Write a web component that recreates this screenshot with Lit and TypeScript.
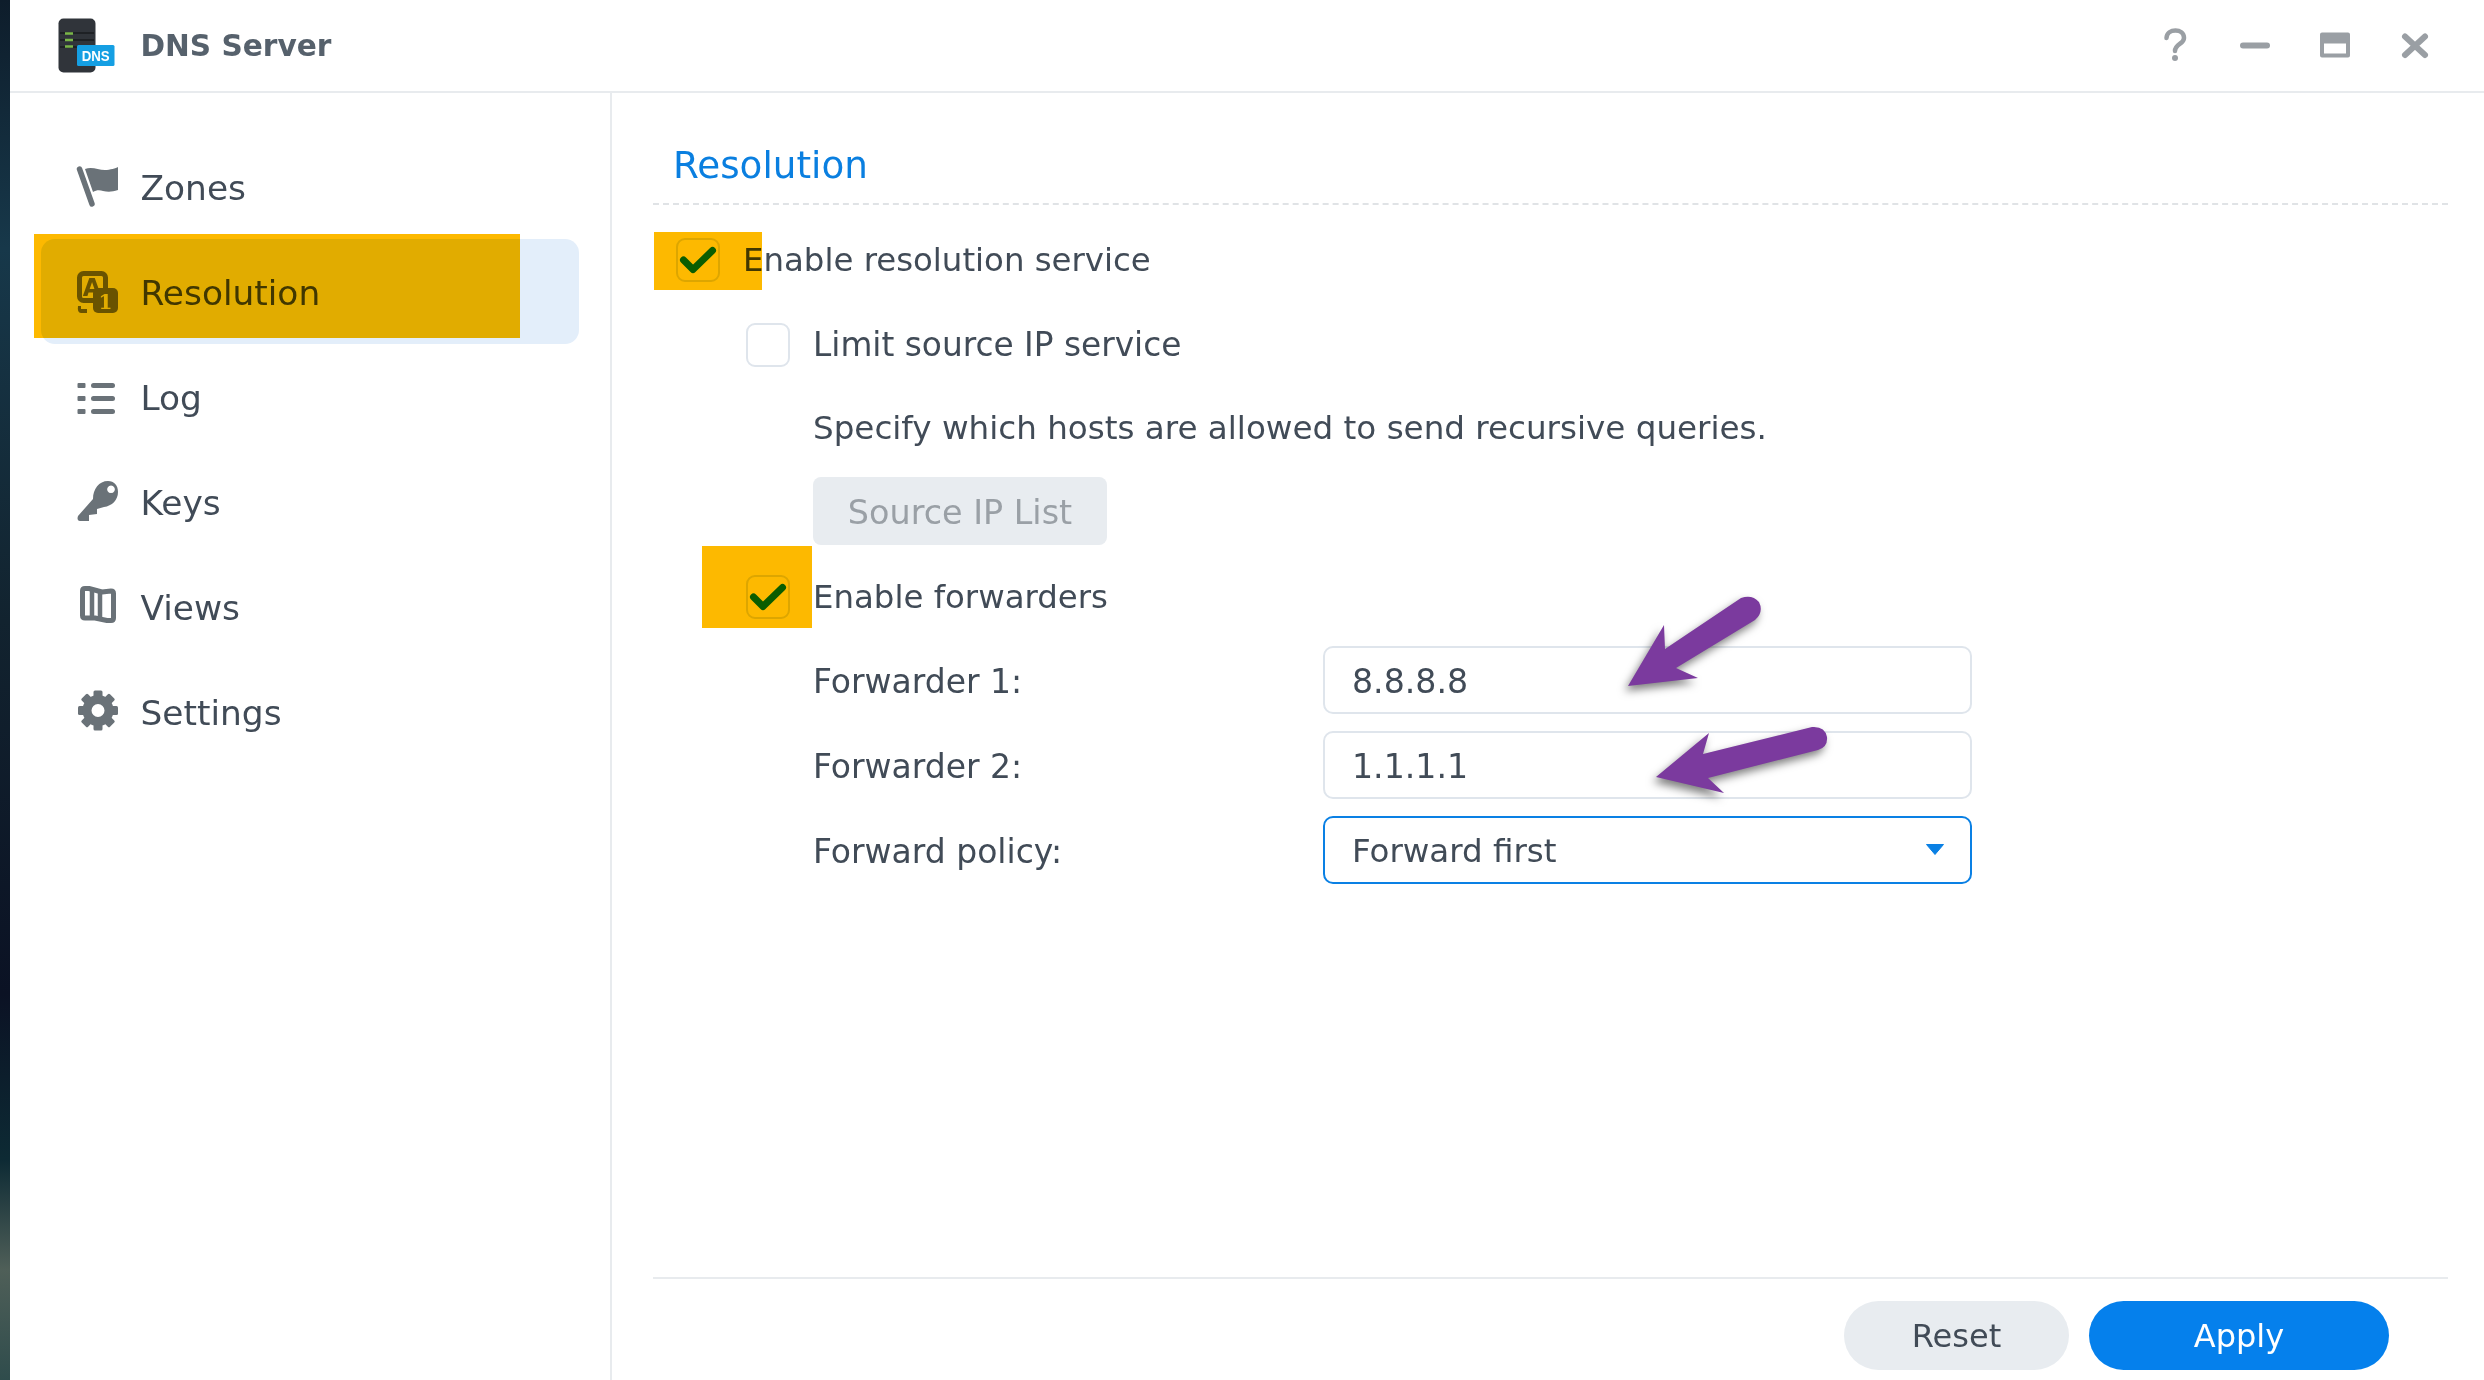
import {css, html, LitElement, svg} from 'lit';
import {customElement} from 'lit/decorators.js';

const zonesIcon = svg`
  <path d="M3.5 4 L16 39" stroke="#6a7278" stroke-width="5.5" stroke-linecap="round" fill="none"/>
  <path d="M9 4 C16 1 22 5 29 5 C34 5 40 3 42 2 V25 C36 27 32 27 27 26 C24 25 20 25 17 27 Z" fill="#6a7278"/>`;

const resolutionIcon = svg`
  <rect x="3.5" y="3.5" width="26" height="27" rx="4" fill="none" stroke="#6a7278" stroke-width="5"/>
  <text x="16" y="26" font-family="DejaVu Sans" font-size="24" font-weight="700" text-anchor="middle" fill="#6a7278">A</text>
  <rect x="17" y="18" width="25" height="25" rx="5" fill="#6a7278"/>
  <text x="29.5" y="39" font-family="DejaVu Serif" font-size="20" font-weight="700" text-anchor="middle" fill="#e3eefa">1</text>
  <path d="M2 36 h3 v3 h6 v4 h-6 q-4 0 -3 -7 Z" fill="#6a7278"/>`;

const logIcon = svg`
  <g fill="#6a7278">
    <rect x="1.5" y="8" width="8" height="5" rx="1"/>
    <rect x="1.5" y="21" width="8" height="5" rx="1"/>
    <rect x="1.5" y="34" width="8" height="5" rx="1"/>
    <rect x="15" y="8" width="24" height="5" rx="2.5"/>
    <rect x="15" y="21" width="24" height="5" rx="2.5"/>
    <rect x="15" y="34" width="24" height="5" rx="2.5"/>
  </g>`;

const keysIcon = svg`
  <path fill-rule="evenodd" fill="#6a7278" d="M2 36 L17 19 C17 9 23 1 32 1 C38 1 42 5 42 12 C42 20 36 26 28 27 L21 29 V34 L13 35 V41 H4 Q1.5 41 1.5 38 Z M35 5.5 a3.8 3.8 0 1 0 0.01 0 Z"/>`;

const viewsIcon = svg`
  <path d="M6.5 6 Q6.5 3.5 9 3.5 L13 3.5 L26 7 L35 6 Q37.5 6 37.5 8.5 V33 Q37.5 35.5 35 35.5 L31 35.5 L19 33 H9 Q6.5 33 6.5 30.5 Z" fill="none" stroke="#6a7278" stroke-width="5" stroke-linejoin="round"/>
  <path d="M16 3 V33 M24 6 V34" stroke="#6a7278" stroke-width="4.5" fill="none"/>`;

const settingsIcon = svg`
  <g fill="#6a7278">
    ${[0, 45, 90, 135, 180, 225, 270, 315].map(
      (deg) => svg`<rect x="17.5" y="0.5" width="9" height="9" rx="1.5" transform="rotate(${deg} 22 20.5)"/>`
    )}
  </g>
  <circle cx="22" cy="20.5" r="11" fill="none" stroke="#6a7278" stroke-width="9"/>`;

const navItems = [
  {label: 'Zones', icon: zonesIcon},
  {label: 'Resolution', icon: resolutionIcon, active: true},
  {label: 'Log', icon: logIcon},
  {label: 'Keys', icon: keysIcon},
  {label: 'Views', icon: viewsIcon},
  {label: 'Settings', icon: settingsIcon},
];

const check = html`<svg class="tick" viewBox="0 0 44 44">
  <path d="M7.5 22 L17 31.5 L36.5 12.5" fill="none" stroke="#0a80e4" stroke-width="7" stroke-linecap="round" stroke-linejoin="round"/>
</svg>`;

@customElement('app-root')
export class AppRoot extends LitElement {
  static override styles = css`
    :host {
      display: block;
      position: relative;
      width: 2484px;
      height: 1380px;
      overflow: hidden;
      font-family: "DejaVu Sans", sans-serif;
      font-size: 32.6px;
      color: #414b57;
      background: #fff;
    }

    .page {
      display: grid;
      grid-template-columns: 10px 1fr;
      height: 100%;
    }

    .wallpaper {
      background: linear-gradient(180deg, #0e1d2b 0%, #17384a 18%, #12232f 45%, #0b1224 72%, #0d2a34 84%, #4f5f58 92%, #2f4c4c 100%);
    }

    .window {
      display: flex;
      flex-direction: column;
      min-width: 0;
      background: #fff;
    }

    .titlebar {
      display: flex;
      align-items: center;
      box-sizing: border-box;
      height: 93px;
      padding: 0 29px 0 48px;
      border-bottom: 2px solid #e8ebee;
      flex: none;
    }

    .app-icon {
      width: 58px;
      height: 56px;
      flex: none;
    }

    .app-name {
      margin-left: 24.5px;
      font-size: 29.6px;
      font-weight: 700;
      color: #56616c;
    }

    .controls {
      display: flex;
      margin-left: auto;
    }

    .control {
      display: flex;
      justify-content: center;
      width: 80px;
    }

    .control svg {
      width: 44px;
      height: 44px;
    }

    .body {
      display: flex;
      flex: 1;
      min-height: 0;
    }

    .sidebar {
      box-sizing: border-box;
      width: 602px;
      padding: 41px 31px 0;
      border-right: 2px solid #e8ebee;
      flex: none;
    }

    .nav-item {
      display: flex;
      align-items: center;
      gap: 20.5px;
      height: 105px;
      padding-left: 35px;
      border-radius: 14px;
      font-size: 34.4px;
    }

    .nav-item span {
      padding-top: 3px;
    }

    .nav-item.active {
      background: #e3eefa;
    }

    .nav-item svg {
      width: 44px;
      height: 44px;
      flex: none;
    }

    .main {
      display: flex;
      flex-direction: column;
      flex: 1;
      min-width: 0;
      padding: 0 36px 10px 41px;
    }

    .section-title {
      margin: 0;
      padding: 50px 0 16px 20px;
      border-bottom: 2px dashed #e0e3e6;
      font-size: 37.3px;
      font-weight: 400;
      line-height: 44px;
      color: #0a7fe0;
    }

    .form {
      display: flex;
      flex-direction: column;
      padding-top: 21px;
    }

    .row {
      display: flex;
      align-items: center;
      height: 68px;
      margin-top: 17px;
    }

    .row.first {
      margin-top: 0;
      font-size: 32.4px;
    }

    .row.tight {
      margin-top: 15px;
    }

    .row.limit {
      font-size: 32.8px;
    }

    .row.forwarders {
      margin-top: 18px;
      font-size: 32.4px;
    }

    .row.indent {
      padding-left: 160px;
    }

    .row.check-top {
      padding-left: 23px;
    }

    .row.check-sub {
      padding-left: 93px;
    }

    .box {
      position: relative;
      box-sizing: border-box;
      width: 44px;
      height: 44px;
      margin-right: 23px;
      border: 2.5px solid #dfe5ec;
      border-radius: 9px;
      flex: none;
    }

    .tick {
      position: absolute;
      left: -2.5px;
      top: -2.5px;
      width: 44px;
      height: 44px;
    }

    .source-btn {
      display: flex;
      align-items: center;
      justify-content: center;
      box-sizing: border-box;
      width: 294px;
      height: 68px;
      padding-top: 2px;
      border-radius: 8px;
      background: #e8ecf0;
      color: #9aa0a6;
      font-size: 33.4px;
    }

    .field-label {
      width: 510px;
      padding-top: 3px;
      font-size: 33px;
      flex: none;
    }

    .field {
      display: flex;
      align-items: center;
      justify-content: space-between;
      box-sizing: border-box;
      width: 649px;
      height: 68px;
      padding: 2px 25px 0 27px;
      border: 2.5px solid #dfe5ec;
      border-radius: 10px;
      font-size: 33.2px;
    }

    .field.focus {
      border-color: #0a80e4;
      font-size: 32.5px;
    }

    .caret {
      width: 20px;
      height: 11px;
      margin-top: -3px;
    }

    .footer {
      display: flex;
      justify-content: flex-end;
      gap: 20px;
      margin-top: auto;
      padding: 22px 59px 0 0;
      border-top: 2px solid #e8ebee;
    }

    .btn {
      display: flex;
      align-items: center;
      justify-content: center;
      height: 69px;
      border-radius: 35px;
      font-size: 32px;
    }

    .btn.reset {
      width: 225px;
      background: #e8ecf0;
    }

    .btn.apply {
      width: 300px;
      background: #0580ec;
      color: #fff;
    }

    .marker {
      position: absolute;
      background: #fdb900;
      mix-blend-mode: multiply;
    }

    .arrows {
      position: absolute;
      left: 1600px;
      top: 580px;
      width: 260px;
      height: 240px;
      filter: drop-shadow(-3px 5px 4px rgba(0, 0, 0, 0.5));
    }
  `;

  override render() {
    return html`
      <div class="page">
        <div class="wallpaper"></div>
        <div class="window">
          <header class="titlebar">
            <svg class="app-icon" viewBox="0 0 58 56">
              <rect x="0.5" y="0.5" width="37" height="54" rx="5" fill="#30343a"/>
              <path d="M2 15 H36 M2 22 H36 M2 29 H20" stroke="#191b1f" stroke-width="1.5"/>
              <path d="M7 15.5 H15 M7 22 H15 M7 28.5 H15" stroke="#7ab648" stroke-width="2.5"/>
              <rect x="19" y="27" width="37.5" height="21" rx="1.5" fill="#159fe3"/>
              <text x="37.7" y="43" font-family="Liberation Sans" font-size="15" font-weight="700" text-anchor="middle" fill="#fff" textLength="28" lengthAdjust="spacingAndGlyphs">DNS</text>
            </svg>
            <span class="app-name">DNS Server</span>
            <div class="controls">
              <span class="control">
                <svg viewBox="0 0 44 44">
                  <path d="M13.5 14 C14 4 31 4 31 14 C31 20 22 20 22 27" fill="none" stroke="#9a9fa4" stroke-width="4.5" stroke-linecap="round"/>
                  <circle cx="22" cy="34" r="3" fill="#9a9fa4"/>
                </svg>
              </span>
              <span class="control">
                <svg viewBox="0 0 44 44">
                  <rect x="7" y="18.5" width="30" height="6" rx="3" fill="#9a9fa4"/>
                </svg>
              </span>
              <span class="control">
                <svg viewBox="0 0 44 44">
                  <path fill-rule="evenodd" fill="#9a9fa4" d="M9 8.5 H35 Q37 8.5 37 10.5 V31.5 Q37 33.5 35 33.5 H9 Q7 33.5 7 31.5 V10.5 Q7 8.5 9 8.5 Z M11 19.5 V29.5 H33 V19.5 Z"/>
                </svg>
              </span>
              <span class="control">
                <svg viewBox="0 0 44 44">
                  <path d="M12 12.5 L32 31 M32 12.5 L12 31" stroke="#9a9fa4" stroke-width="6" stroke-linecap="round"/>
                </svg>
              </span>
            </div>
          </header>
          <div class="body">
            <nav class="sidebar">
              ${navItems.map(
                (item) => html`
                  <div class="nav-item ${item.active ? 'active' : ''}">
                    <svg viewBox="0 0 44 44">${item.icon}</svg>
                    <span>${item.label}</span>
                  </div>
                `
              )}
            </nav>
            <section class="main">
              <h2 class="section-title">Resolution</h2>
              <div class="form">
                <div class="row first check-top"><span class="box">${check}</span>Enable resolution service</div>
                <div class="row limit check-sub"><span class="box"></span>Limit source IP service</div>
                <div class="row tight indent">Specify which hosts are allowed to send recursive queries.</div>
                <div class="row tight indent"><span class="source-btn">Source IP List</span></div>
                <div class="row forwarders check-sub"><span class="box">${check}</span>Enable forwarders</div>
                <div class="row tight indent"><span class="field-label">Forwarder 1:</span><span class="field">8.8.8.8</span></div>
                <div class="row indent"><span class="field-label">Forwarder 2:</span><span class="field">1.1.1.1</span></div>
                <div class="row indent">
                  <span class="field-label">Forward policy:</span>
                  <span class="field focus">
                    Forward first
                    <svg class="caret" viewBox="0 0 20 11"><path d="M1.5 0.5 H18.5 L10 10.5 Z" fill="#0a80e4" stroke="#0a80e4" stroke-linejoin="round"/></svg>
                  </span>
                </div>
              </div>
              <footer class="footer">
                <span class="btn reset">Reset</span>
                <span class="btn apply">Apply</span>
              </footer>
            </section>
          </div>
        </div>
      </div>

      <div class="marker" style="left:34px;top:234px;width:486px;height:104px"></div>
      <div class="marker" style="left:654px;top:232px;width:108px;height:58px"></div>
      <div class="marker" style="left:702px;top:546px;width:110px;height:82px"></div>

      <svg class="arrows" viewBox="1600 580 260 240">
        <path fill="#7b3a9e" d="M1628 686 L1664 625 L1665 649 L1741 598 Q1752 594 1759 602 Q1764 612 1755 620 L1676 668 L1698 678 Z"/>
        <path fill="#7b3a9e" d="M1656 777 L1709 733 L1703 754 L1812 727 Q1825 726 1827 737 Q1828 747 1818 750 L1708 778 L1724 793 Z"/>
      </svg>
    `;
  }
}

declare global {
  interface HTMLElementTagNameMap {
    'app-root': AppRoot;
  }
}
